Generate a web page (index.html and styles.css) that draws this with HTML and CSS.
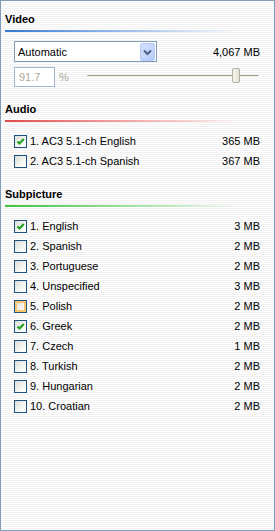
FILE: index.html
```html
<!DOCTYPE html>
<html lang="en">
<head>
    <meta charset="UTF-8">
    <meta name="viewport" content="width=device-width, initial-scale=1.0">
    <title>Streams</title>
    <link rel="stylesheet" href="styles.css">
</head>
<body>
    <div class="panel">
        <div class="section">
            <h2 class="heading heading-video">Video</h2>
            <div class="video-row">
                <div class="combo">
                    <span class="combo-text">Automatic</span>
                    <span class="combo-button">
                        <svg width="15" height="18" viewBox="0 0 15 18"><path d="M4 7.5 L7.5 11 L11 7.5" fill="none" stroke="#4d6185" stroke-width="2"/></svg>
                    </span>
                </div>
                <span class="size">4,067 MB</span>
            </div>
            <div class="quality-row">
                <input class="quality" type="text" value="91.7" disabled>
                <span class="percent">%</span>
                <div class="slider">
                    <div class="track"></div>
                    <div class="thumb" style="left: 84.4%"></div>
                </div>
            </div>
        </div>

        <div class="section section-audio">
            <h2 class="heading heading-audio">Audio</h2>
            <ul class="list">
                <li class="item"><span class="check checked"><svg width="11" height="11" viewBox="0 0 11 11"><path d="M2.5 5.5 L4.5 7.5 L8.8 3" fill="none" stroke="#21a121" stroke-width="2.2"/></svg></span><span class="name">1. AC3 5.1-ch English</span><span class="size">365 MB</span></li>
                <li class="item"><span class="check"></span><span class="name">2. AC3 5.1-ch Spanish</span><span class="size">367 MB</span></li>
            </ul>
        </div>

        <div class="section section-sub">
            <h2 class="heading heading-sub">Subpicture</h2>
            <ul class="list">
                <li class="item"><span class="check checked"><svg width="11" height="11" viewBox="0 0 11 11"><path d="M2.5 5.5 L4.5 7.5 L8.8 3" fill="none" stroke="#21a121" stroke-width="2.2"/></svg></span><span class="name">1. English</span><span class="size">3 MB</span></li>
                <li class="item"><span class="check"></span><span class="name">2. Spanish</span><span class="size">2 MB</span></li>
                <li class="item"><span class="check"></span><span class="name">3. Portuguese</span><span class="size">2 MB</span></li>
                <li class="item"><span class="check"></span><span class="name">4. Unspecified</span><span class="size">3 MB</span></li>
                <li class="item"><span class="check hover"></span><span class="name">5. Polish</span><span class="size">2 MB</span></li>
                <li class="item"><span class="check checked"><svg width="11" height="11" viewBox="0 0 11 11"><path d="M2.5 5.5 L4.5 7.5 L8.8 3" fill="none" stroke="#21a121" stroke-width="2.2"/></svg></span><span class="name">6. Greek</span><span class="size">2 MB</span></li>
                <li class="item"><span class="check"></span><span class="name">7. Czech</span><span class="size">1 MB</span></li>
                <li class="item"><span class="check"></span><span class="name">8. Turkish</span><span class="size">2 MB</span></li>
                <li class="item"><span class="check"></span><span class="name">9. Hungarian</span><span class="size">2 MB</span></li>
                <li class="item"><span class="check"></span><span class="name">10. Croatian</span><span class="size">2 MB</span></li>
            </ul>
        </div>
    </div>
</body>
</html>
```

FILE: styles.css
```css
body {
    margin: 0;
    font-family: "Liberation Sans", Arial, sans-serif;
    font-size: 11px;
    color: #000;
}

.panel {
    width: 275px;
    height: 531px;
    box-sizing: border-box;
    border: 1px solid #7f9db9;
    padding: 12px 14px 0 4px;
    background: repeating-linear-gradient(to bottom, #fff 0, #fff 1px, #f1f1f1 1px, #f1f1f1 2px);
}

.heading {
    margin: 0;
    font-size: 11px;
    font-weight: bold;
    line-height: 13px;
}

.heading::after {
    content: "";
    display: block;
    height: 2px;
    margin-top: 4px;
}

.heading-video::after {
    background: linear-gradient(to right, #3677d2 0%, #8fb4e8 40%, #d3e1f4 72%, rgba(255, 255, 255, 0) 92%);
}

.heading-audio::after {
    background: linear-gradient(to right, #e24b4b 0%, #ee9a9a 40%, #f6d0d0 72%, rgba(255, 255, 255, 0) 92%);
}

.heading-sub::after {
    background: linear-gradient(to right, #3fc23f 0%, #8fdc8f 40%, #cdeecd 72%, rgba(255, 255, 255, 0) 92%);
}

.section-audio {
    margin-top: 16px;
}

.section-sub {
    margin-top: 17px;
}

.video-row {
    display: flex;
    align-items: center;
    justify-content: space-between;
    margin: 9px 0 0 9px;
}

.combo {
    display: flex;
    align-items: center;
    justify-content: space-between;
    width: 143px;
    height: 21px;
    box-sizing: border-box;
    border: 1px solid #7f9db9;
    background: #fff;
    padding: 1px 1px 1px 3px;
}

.combo-button {
    display: block;
    width: 15px;
    height: 18px;
    box-sizing: border-box;
    border: 1px solid #b5c8f3;
    border-radius: 2px;
    background: linear-gradient(135deg, #d4e0fd, #b7cbfa);
}

.combo-button svg {
    display: block;
    margin: -1px;
}

.quality-row {
    display: flex;
    align-items: center;
    height: 20px;
    margin: 5px 0 0 9px;
}

.quality {
    width: 41px;
    height: 20px;
    box-sizing: border-box;
    border: 1px solid #a3b6d0;
    background: #fff;
    color: #aca899;
    font-family: inherit;
    font-size: 11px;
    padding: 0 0 0 4px;
    margin: 0;
}

.percent {
    margin-left: 4px;
    color: #aca899;
}

.slider {
    position: relative;
    flex: 1;
    height: 20px;
    margin: 0 1px 0 18px;
}

.track {
    margin-top: 8px;
    height: 1px;
    border-top: 1px solid #a19f98;
    border-bottom: 1px solid #fff;
    background: #efede4;
    border-radius: 1px;
}

.thumb {
    position: absolute;
    top: 1px;
    width: 8px;
    height: 15px;
    box-sizing: border-box;
    border: 1px solid #b2b0a3;
    border-radius: 2px;
    background: linear-gradient(to right, #f6f5ef, #e3e1d6);
}

.list {
    list-style: none;
    margin: 9px 0 0 9px;
    padding: 0;
}

.item {
    display: flex;
    align-items: center;
    height: 20px;
}

.check {
    display: block;
    width: 13px;
    height: 13px;
    box-sizing: border-box;
    border: 1px solid #1c5180;
    background: linear-gradient(135deg, #dcdcd6, #fff 85%);
    margin-right: 3px;
    flex: none;
}

.check svg {
    display: block;
}

.check.hover {
    background: linear-gradient(135deg, #e2e1da, #fff);
    box-shadow: inset 0 0 0 2px #f9c76a;
}

.name {
    flex: 1;
}
```
